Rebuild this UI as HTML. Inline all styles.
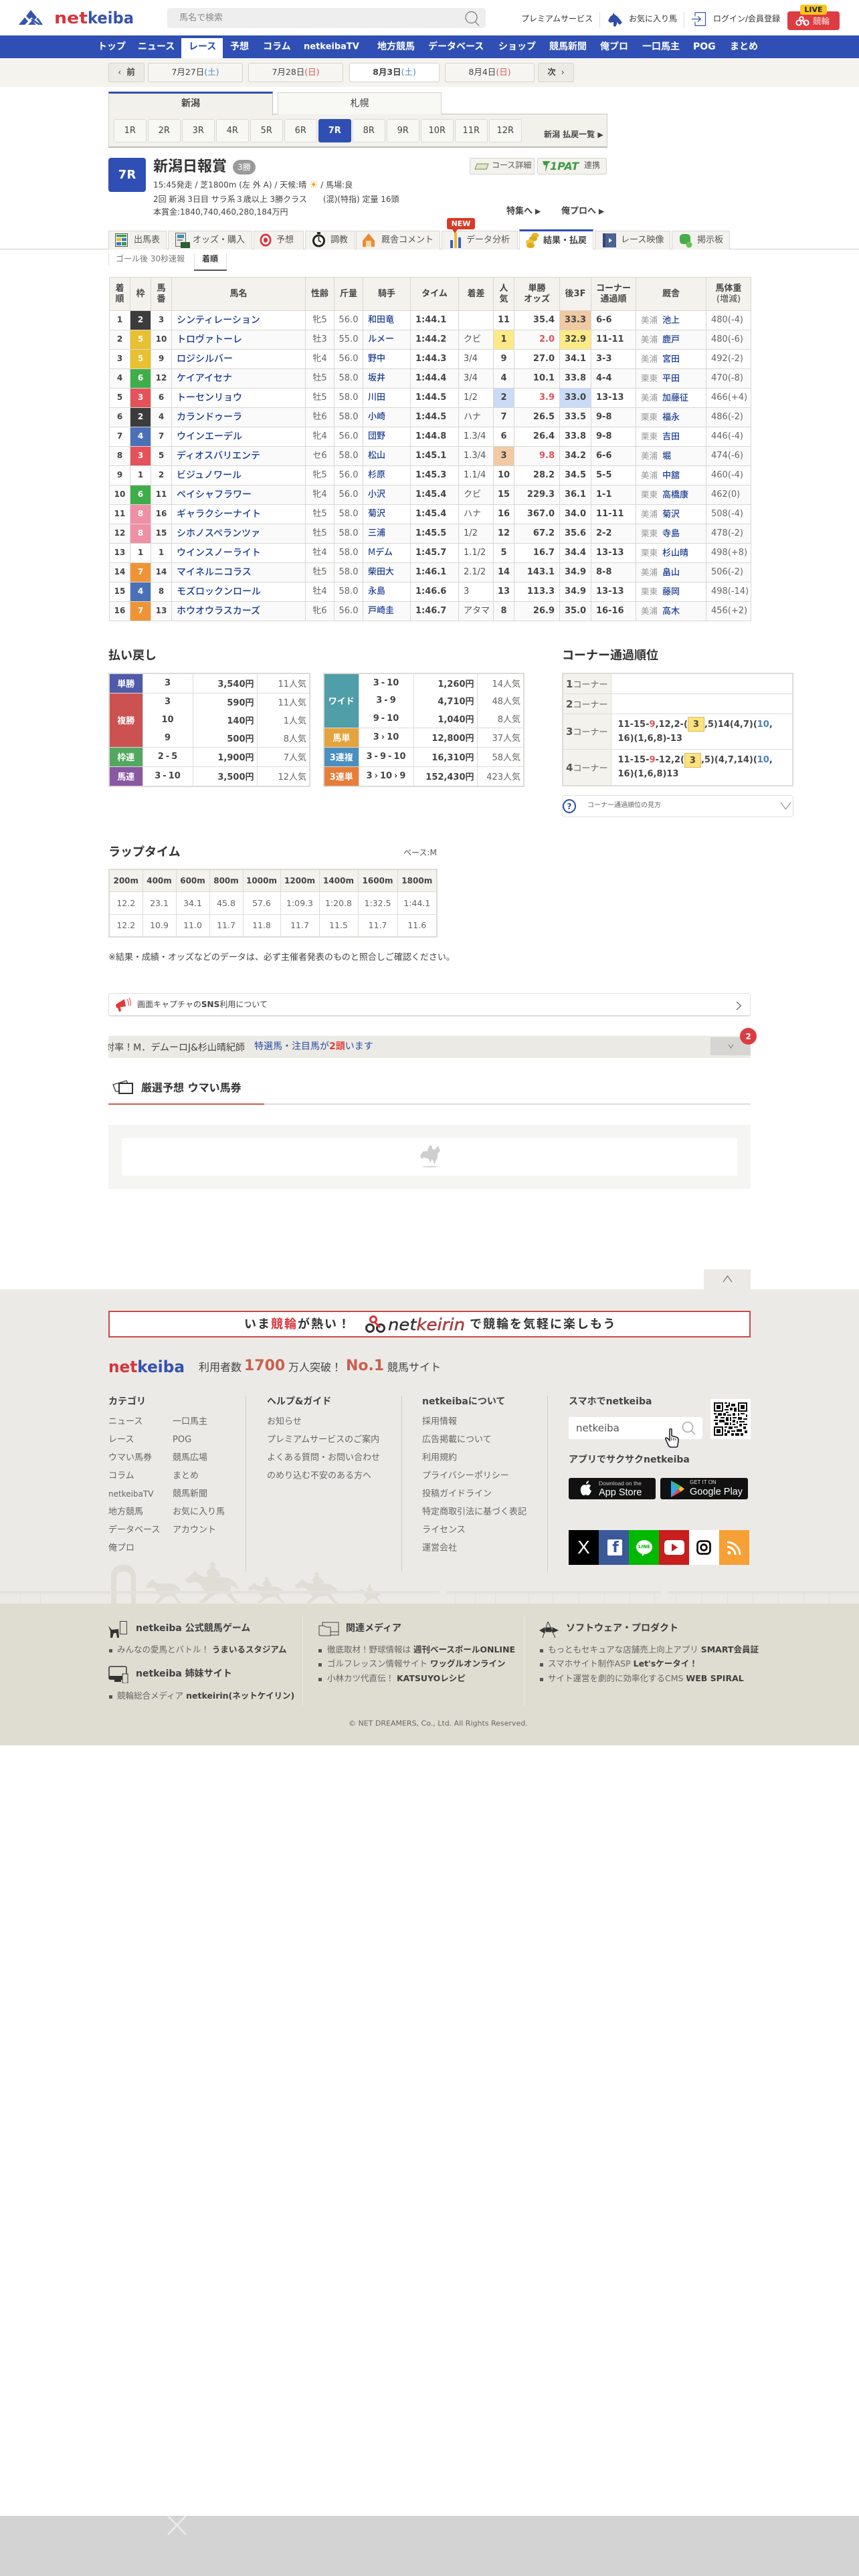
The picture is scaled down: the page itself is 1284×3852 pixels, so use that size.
<!DOCTYPE html>
<html lang="ja"><head><meta charset="utf-8"><title>新潟日報賞 | netkeiba</title>
<style>
*{box-sizing:border-box}
html,body{margin:0;padding:0}
body{width:1284px;height:3852px;position:relative;overflow:hidden;background:#fff;font-family:"DejaVu Sans","Noto Sans CJK JP",sans-serif;font-size:13px;color:#333}
.b{position:absolute}
.t{position:absolute;white-space:nowrap;transform:translateY(-50%);line-height:1}
.c{position:absolute;display:flex;align-items:center;justify-content:center;white-space:nowrap;line-height:1}
.w{color:#fff;font-weight:bold;font-size:14px}
.bn{background:#f6f5f1;border:1px solid #d5d4cf;border-radius:3px;font-size:12.5px;color:#444}
.rb{top:178px;width:48.5px;height:34.5px;background:#f7f7f4;border:1px solid #dbdad5;border-radius:3px;font-size:13px;color:#444}
.tab{top:345px;height:28px;background:#f3f2ee;border:1px solid #d9d8d3;border-bottom:0}
.tt{top:359px;font-size:13px;color:#555}
table{border-collapse:collapse;table-layout:fixed;position:absolute}
.r th{background:#f3f2ed;color:#444;font-size:13px;font-weight:bold;border:1px solid #d8d7d3;padding:0;line-height:16px;height:50px}
.r td{border:1px solid #d8d7d3;height:29px;padding:0;font-size:13px;line-height:16px;white-space:nowrap;overflow:hidden}
.r tbody tr:nth-child(even) td{background:#fafafa}
.r tbody tr:nth-child(odd) td{background:#fff}
.r td:nth-child(1),.r td:nth-child(3){text-align:center;font-weight:bold;color:#444;font-size:12px;padding-bottom:3px}
.r td:nth-child(2){text-align:center;font-weight:bold;color:#fff;font-size:12px;padding-bottom:3px}
.r td:nth-child(4){padding-left:7px;font-size:14px;color:#1c3f94;font-weight:500}
.r td:nth-child(5),.r td:nth-child(6){text-align:center;color:#666}
.r td:nth-child(7){padding-left:7px;color:#1c3f94;font-weight:500}
.r td:nth-child(8),.r td:nth-child(12){font-weight:bold;color:#444;padding-left:7px}
.r td:nth-child(12){padding-left:0;text-align:center}
.r td:nth-child(9){padding-left:7px;color:#555}
.r td:nth-child(10){text-align:center;font-weight:bold;color:#444}
.r td:nth-child(11){text-align:right;padding-right:7px;font-weight:bold;color:#444}
.r td:nth-child(13){padding-left:7px;font-weight:bold;color:#444}
.r td:nth-child(14){padding-left:7px;color:#1c3f94;font-weight:500}
.r td:nth-child(14) u{text-decoration:none;color:#999;font-weight:400;font-size:12.5px;margin-right:7px}
.r td:nth-child(15){padding-left:7px;color:#666}
.r tbody tr td.w1{background:#fff;color:#444}.r tbody tr td.w2{background:#3c3c3c}.r tbody tr td.w3{background:#e5525a}.r tbody tr td.w4{background:#4a70b8}.r tbody tr td.w5{background:#e8c030}.r tbody tr td.w6{background:#3fae4a}.r tbody tr td.w7{background:#ef9436}.r tbody tr td.w8{background:#ef90a5}
.r tbody tr td.y{background:#fdea86}.r tbody tr td.bl{background:#c9dbf6}.r tbody tr td.o{background:#f1c9a2}
.r tbody tr td.red{color:#d9545a}
.p td,.p th{border:1px solid #dcdcd8;padding:0;font-size:13px;white-space:nowrap}
.p{border:2px solid #dcdcd8}
.p th{color:#fff;font-size:13px;font-weight:bold;text-align:center;border-color:#dcdcd8}
.p td{color:#444;font-weight:bold}
.p .n{text-align:center}
.p .v{text-align:right;padding-right:4px}
.p .k{text-align:right;padding-right:4px;font-weight:400;color:#666}
.p .nb td{border-top:0;border-bottom:0}
.p s{text-decoration:none;margin:0 3px}
.cr td,.cr th{border:1px solid #dcdcd8;padding:0;font-size:13px}
.cr{border:2px solid #dcdcd8}
.cr th{background:#f3f2ed;text-align:left;padding-left:4px;font-weight:400;color:#666;white-space:nowrap}
.cr th b{font-size:15px;color:#555}
.cr td{padding-left:10px;font-weight:bold;color:#444;line-height:21px;white-space:nowrap}
.cr i{font-style:normal;display:inline-block;width:25px;height:22px;line-height:21px;background:#ffe27c;border:1px solid #d8bb55;text-align:center;vertical-align:middle;margin:-2px 0}
.lap td,.lap th{border:1px solid #dcdcd8;padding:0;text-align:center;white-space:nowrap}
.lap{border:2px solid #dcdcd8}
.lap th{background:#f3f2ed;color:#444;font-size:12px;height:33px}
.lap td{color:#666;height:34px;font-size:12.5px}
.fl{font-size:13px;color:#666}
.fh{font-size:14px;font-weight:bold;color:#444}
.d{font-size:12.5px;color:#666}
.d b{color:#3f3f3f}
.sq{position:absolute;width:5px;height:5px;background:#555}
.soc{position:absolute;top:2288px;width:45px;height:52px}
</style></head><body>

<!-- HEADER -->
<svg class="b" style="left:28px;top:15px" width="174" height="24" viewBox="0 0 174 24">
<path d="M0 22 L9 11 L14 17 L9 22Z M11 9 L18 0 L27 11 L23 15 L19 11 L16 14Z M18 15 L20 13 L34 22 L29 22Z M14 22 L20 16 L26 22Z M26 13 L29 12 L36 22 L33 22Z" fill="#3552b0"/>
<text x="53" y="20" font-family="DejaVu Sans" font-weight="bold" font-size="24" textLength="50" lengthAdjust="spacingAndGlyphs" fill="#d8343c">net</text>
<text x="103" y="20" font-family="DejaVu Sans" font-weight="bold" font-size="24" textLength="69" lengthAdjust="spacingAndGlyphs" fill="#3552b0">keiba</text>
</svg>
<div class="b" style="left:250px;top:12px;width:476px;height:30px;background:#eeeeee;border-radius:4px"></div>
<div class="t" style="left:268px;top:27px;font-size:13px;color:#888">馬名で検索</div>
<svg class="b" style="left:694px;top:16px" width="24" height="24" viewBox="0 0 24 24" fill="none" stroke="#777" stroke-width="1.2"><circle cx="10.5" cy="10" r="8.5"/><path d="M16.5 16.5 L22 22.5"/></svg>
<div class="t" style="left:779px;top:28px;font-size:12px;color:#333">プレミアムサービス</div>
<div class="b" style="left:896px;top:18px;width:1px;height:23px;background:#ddd"></div>
<svg class="b" style="left:909px;top:19px" width="22" height="22" viewBox="0 0 22 22"><path d="M8 0 L10 3 C14 5 17 9 21 15 L17 18 L13 14 L13 17 L11 21 L8 20 L8 14 L3 15 L0 12 L3 6 L7 3Z" fill="#2d4da8"/></svg>
<div class="t" style="left:940px;top:28px;font-size:12px;color:#333">お気に入り馬</div>
<div class="b" style="left:1022px;top:18px;width:1px;height:23px;background:#ddd"></div>
<svg class="b" style="left:1034px;top:18px" width="22" height="21" viewBox="0 0 22 21" fill="none" stroke="#3a56a8" stroke-width="1.2"><path d="M5 0.6 H20.5 V20.4 H5 V14.5 M5 6.5 V0.6"/><path d="M0 10.5 H13 M9 6.5 L13.5 10.5 L9 14.5"/></svg>
<div class="t" style="left:1066px;top:28px;font-size:12px;color:#333">ログイン/会員登録</div>
<div class="b" style="left:1177px;top:17px;width:78px;height:28px;background:#dc3c42;border-radius:4px"></div>
<svg class="b" style="left:1189px;top:24px" width="21" height="15" viewBox="0 0 21 15" fill="none" stroke="#fff" stroke-width="2"><circle cx="5" cy="10" r="3.6"/><circle cx="16" cy="10" r="3.6"/><circle cx="9" cy="4" r="2.8"/><path d="M10 6 L15 12"/></svg>
<div class="t" style="left:1215px;top:32px;font-size:12.5px;color:#ffe4e4">競輪</div>
<div class="c" style="left:1196px;top:7px;width:40px;height:15px;background:#fdc51a;border-radius:3px;font-size:11px;font-weight:bold;color:#222">LIVE</div>

<!-- NAV -->
<div class="b" style="left:0;top:53px;width:1284px;height:34px;background:#2f4fb4"></div>
<div class="b" style="left:271px;top:57px;width:61.5px;height:30px;background:#fff"></div>
<div class="t w" style="left:146px;top:70px">トップ</div>
<div class="t w" style="left:206px;top:70px">ニュース</div>
<div class="t" style="left:282px;top:70px;font-size:14px;font-weight:bold;color:#2f4fb4">レース</div>
<div class="t w" style="left:344px;top:70px">予想</div>
<div class="t w" style="left:393px;top:70px">コラム</div>
<div class="t w" style="left:454px;top:70px;font-size:13px">netkeibaTV</div>
<div class="t w" style="left:564px;top:70px">地方競馬</div>
<div class="t w" style="left:640px;top:70px">データベース</div>
<div class="t w" style="left:745px;top:70px">ショップ</div>
<div class="t w" style="left:821px;top:70px">競馬新聞</div>
<div class="t w" style="left:897px;top:70px">俺プロ</div>
<div class="t w" style="left:960px;top:70px">一口馬主</div>
<div class="t w" style="left:1036px;top:70px;font-size:14px">POG</div>
<div class="t w" style="left:1091px;top:70px">まとめ</div>

<!-- DATE BAR -->
<div class="b" style="left:0;top:87px;width:1284px;height:43px;background:#f4f3ee"></div>
<div class="c bn" style="left:162px;top:94px;width:54px;height:29px;background:#ecebe6">‹&nbsp;&nbsp;<b>前</b></div>
<div class="c bn" style="left:221px;top:94px;width:142px;height:29px">7月27日<span style="color:#4a87c0">(土)</span></div>
<div class="c bn" style="left:371px;top:94px;width:142px;height:29px">7月28日<span style="color:#d9534f">(日)</span></div>
<div class="c bn" style="left:522px;top:94px;width:135px;height:29px;background:#fff"><b>8月3日</b><span style="color:#4a87c0">(土)</span></div>
<div class="c bn" style="left:665px;top:94px;width:134px;height:29px">8月4日<span style="color:#d9534f">(日)</span></div>
<div class="c bn" style="left:804px;top:94px;width:54px;height:29px;background:#ecebe6"><b>次</b>&nbsp;&nbsp;›</div>

<!-- COURSE TABS -->
<div class="b" style="left:162px;top:170px;width:746px;height:51px;background:#f2f1ec;border:1px solid #d0cfca;border-top-color:#c4c3be;border-bottom:2px solid #bdbcb7"></div>
<div class="c" style="left:162px;top:137px;width:246px;height:35px;background:#f2f1ec;border-top:3px solid #2f4fb4;border-left:1px solid #d0cfca;border-right:1px solid #c4c3be;font-size:14px;font-weight:bold;color:#444;padding-bottom:2px">新潟</div>
<div class="c" style="left:415px;top:138px;width:245px;height:33px;background:#f8f8f5;border:1px solid #d5d4cf;border-bottom:0;font-size:14px;color:#444">札幌</div>
<div class="c rb" style="left:170px">1R</div><div class="c rb" style="left:221px">2R</div><div class="c rb" style="left:272px">3R</div><div class="c rb" style="left:323px">4R</div><div class="c rb" style="left:374px">5R</div><div class="c rb" style="left:425px">6R</div>
<div class="c rb" style="left:476px;background:#2f4fb4;border-color:#2f4fb4;color:#fff;font-weight:bold">7R</div>
<div class="c rb" style="left:527px">8R</div><div class="c rb" style="left:578px">9R</div><div class="c rb" style="left:629px">10R</div><div class="c rb" style="left:680px">11R</div><div class="c rb" style="left:731px">12R</div>
<div class="t" style="left:813px;top:201px;font-size:12px;font-weight:bold;color:#444">新潟 払戻一覧 <span style="font-size:11px">▶</span></div>

<!-- RACE INFO -->
<div class="c" style="left:162px;top:236px;width:56px;height:51px;background:#2f4fb4;border-radius:4px;color:#fff;font-size:18px;font-weight:bold">7R</div>
<div class="t" style="left:229px;top:250px;font-size:22px;font-weight:bold;color:#333">新潟日報賞</div>
<div class="c" style="left:348px;top:239px;width:34px;height:22px;background:#9a9a9a;border-radius:11px;color:#fff;font-size:12px">3勝</div>
<div class="t" style="left:229px;top:277px;font-size:12px;color:#444">15:45発走 / 芝1800m (左 外 A) / 天候:晴 <span style="color:#f0a020;font-size:15px;vertical-align:-1px">☀</span> / 馬場:良</div>
<div class="t" style="left:229px;top:298px;font-size:12px;color:#444">2回 新潟 3日目 サラ系３歳以上 3勝クラス　　(混)(特指) 定量 16頭</div>
<div class="t" style="left:229px;top:317px;font-size:12px;color:#444">本賞金:1840,740,460,280,184万円</div>
<div class="b" style="left:702px;top:236px;width:97px;height:25px;background:#f3f2ed;border:1px solid #d5d4cf;border-radius:2px"></div>
<svg class="b" style="left:709px;top:243px" width="22" height="12" viewBox="0 0 22 12"><path d="M4 2 H21 L18 10 H1Z" fill="#dfe7c8" stroke="#7b8a55"/></svg>
<div class="t" style="left:735px;top:247px;font-size:12px;color:#555">コース詳細</div>
<div class="b" style="left:803px;top:236px;width:104px;height:25px;background:#f3f2ed;border:1px solid #d5d4cf;border-radius:2px"></div>
<svg class="b" style="left:810px;top:240px" width="14" height="17" viewBox="0 0 14 17"><path d="M1 1 H13 L9 5 L6 15 L5 16 L6 7 H3Z" fill="#3e9a44"/></svg>
<div class="t" style="left:822px;top:249px;font-size:16px;font-weight:bold;font-style:italic;color:#3e9a44">1PAT</div>
<div class="t" style="left:873px;top:247px;font-size:12px;color:#555">連携</div>
<div class="t" style="left:757px;top:316px;font-size:13px;font-weight:bold;color:#444">特集へ<span style="font-size:11px"> ▶</span></div>
<div class="t" style="left:839px;top:316px;font-size:13px;font-weight:bold;color:#444">俺プロへ<span style="font-size:11px"> ▶</span></div>

<!-- RACE TABS -->
<div class="b" style="left:0;top:372px;width:1284px;height:1px;background:#cfcfcb"></div>
<div class="b tab" style="left:162px;width:87px"></div><div class="b tab" style="left:251px;width:126px"></div><div class="b tab" style="left:379px;width:75px"></div><div class="b tab" style="left:456px;width:75px"></div><div class="b tab" style="left:532px;width:126px"></div><div class="b tab" style="left:660px;width:114px"></div>
<div class="b" style="left:776px;top:343px;width:111px;height:30px;background:#fff;border-top:3px solid #2f4fb4;border-left:1px solid #d9d8d3;border-right:1px solid #d9d8d3"></div>
<div class="b tab" style="left:889px;width:113px"></div><div class="b tab" style="left:1004px;width:87px"></div>
<svg class="b" style="left:172px;top:349px" width="19" height="20" viewBox="0 0 19 20"><rect x=".5" y=".5" width="18" height="19" fill="#fff" stroke="#555"/><rect x="2" y="2" width="15" height="3.5" fill="#3a9a4a"/><rect x="2" y="7" width="7" height="4.5" fill="#e9b93b"/><rect x="10" y="7" width="7" height="4.5" fill="#3d7cc0"/><rect x="2" y="13" width="7" height="5" fill="#3d7cc0"/><rect x="10" y="13" width="7" height="5" fill="#3a9a4a"/></svg>
<div class="t tt" style="left:200px">出馬表</div>
<svg class="b" style="left:262px;top:348px" width="22" height="23" viewBox="0 0 22 23"><rect x=".5" y=".5" width="15" height="20" fill="#e8e8e4" stroke="#666"/><rect x="3" y="3" width="10" height="5" fill="#3d8fb0"/><rect x="3" y="10" width="8" height="2" fill="#888"/><rect x="8" y="14" width="14" height="9" fill="#2f5d2f"/></svg>
<div class="t tt" style="left:288px">オッズ・購入</div>
<svg class="b" style="left:388px;top:349px" width="18" height="20" viewBox="0 0 18 20" fill="none"><ellipse cx="9" cy="10" rx="8.5" ry="9.5" fill="#d8343c"/><ellipse cx="9" cy="10" rx="5.8" ry="6.6" fill="#fff"/><ellipse cx="9" cy="10" rx="3.2" ry="3.8" fill="#d8343c"/></svg>
<div class="t tt" style="left:413px">予想</div>
<svg class="b" style="left:467px;top:347px" width="19" height="23" viewBox="0 0 19 23" fill="none"><circle cx="9.5" cy="13" r="8" fill="#fff" stroke="#222" stroke-width="3"/><rect x="7" y="0" width="5" height="3" fill="#222"/><path d="M9.5 7 V13 L13 15" stroke="#222" stroke-width="1.6"/></svg>
<div class="t tt" style="left:494px">調教</div>
<svg class="b" style="left:542px;top:349px" width="18" height="20" viewBox="0 0 18 20"><path d="M9 0 L18 11 V20 H0 V11Z" fill="#ec8a35"/><path d="M5 11 H13 V20 H5Z" fill="#f6d9a5"/></svg>
<div class="t tt" style="left:570px">厩舎コメント</div>
<svg class="b" style="left:672px;top:347px" width="18" height="24" viewBox="0 0 18 24"><rect x="1" y="12" width="4" height="12" fill="#3a5fc0"/><rect x="7" y="1" width="4" height="23" fill="#f0b92f"/><rect x="13" y="8" width="4" height="16" fill="#3a5fc0"/></svg>
<div class="t tt" style="left:697px">データ分析</div>
<svg class="b" style="left:786px;top:347px" width="20" height="24" viewBox="0 0 20 24"><ellipse cx="14" cy="5" rx="5.5" ry="4" fill="#e9b528"/><ellipse cx="11" cy="10" rx="6" ry="4" fill="#dcaa20"/><ellipse cx="6" cy="15" rx="6" ry="4" fill="#efc53a"/><ellipse cx="7" cy="20" rx="6" ry="4" fill="#dcaa20"/></svg>
<div class="t" style="left:812px;top:360px;font-size:13px;font-weight:bold;color:#444">結果・払戻</div>
<svg class="b" style="left:901px;top:349px" width="20" height="21" viewBox="0 0 20 21"><rect width="20" height="21" fill="#4a6294"/><rect x="0" y="0" width="4" height="21" fill="#36496f"/><path d="M9 7 L14 10.5 L9 14Z" fill="#fff"/></svg>
<div class="t tt" style="left:928px">レース映像</div>
<svg class="b" style="left:1016px;top:350px" width="20" height="21" viewBox="0 0 20 21"><rect x="0" y="0" width="16" height="15" rx="5" fill="#46ad4a"/><circle cx="14" cy="16" r="4.5" fill="#67c25a"/></svg>
<div class="t tt" style="left:1042px">掲示板</div>
<div class="c" style="left:668px;top:326px;width:42px;height:17px;background:#d93a26;border-radius:3px;color:#fff;font-size:11px;font-weight:bold">NEW</div>
<svg class="b" style="left:676px;top:343px" width="8" height="6"><path d="M0 0 H8 L4 6Z" fill="#d93a26"/></svg>

<!-- SUB TABS -->
<div class="b" style="left:162px;top:379px;width:1px;height:18px;background:#ddd"></div>
<div class="t" style="left:173px;top:387px;font-size:12px;color:#777">ゴール後 30秒速報</div>
<div class="b" style="left:290px;top:379px;width:1px;height:25px;background:#ddd"></div>
<div class="b" style="left:338px;top:379px;width:1px;height:25px;background:#ddd"></div>
<div class="b" style="left:290px;top:403px;width:49px;height:2px;background:#555"></div>
<div class="t" style="left:302px;top:387px;font-size:12px;font-weight:bold;color:#333">着順</div>

<!-- RESULT TABLE -->
<table class="r" style="left:163px;top:414px;width:959px">
<colgroup><col style="width:31px"><col style="width:31px"><col style="width:31px"><col style="width:200px"><col style="width:43px"><col style="width:43px"><col style="width:71px"><col style="width:72px"><col style="width:52px"><col style="width:31px"><col style="width:68px"><col style="width:47px"><col style="width:67px"><col style="width:105px"><col style="width:67px"></colgroup>
<thead><tr><th>着<br>順</th><th>枠</th><th>馬<br>番</th><th>馬名</th><th>性齢</th><th>斤量</th><th>騎手</th><th>タイム</th><th>着差</th><th>人<br>気</th><th>単勝<br>オッズ</th><th>後3F</th><th>コーナー<br>通過順</th><th>厩舎</th><th>馬体重<br><span style="font-weight:400">(増減)</span></th></tr></thead>
<tbody>
<tr><td>1</td><td class="w2">2</td><td>3</td><td>シンティレーション</td><td>牝5</td><td>56.0</td><td>和田竜</td><td>1:44.1</td><td></td><td>11</td><td>35.4</td><td class="o">33.3</td><td>6-6</td><td><u>美浦</u>池上</td><td>480(-4)</td></tr>
<tr><td>2</td><td class="w5">5</td><td>10</td><td>トロヴァトーレ</td><td>牡3</td><td>55.0</td><td>ルメー</td><td>1:44.2</td><td>クビ</td><td class="y">1</td><td class="red">2.0</td><td class="y">32.9</td><td>11-11</td><td><u>美浦</u>鹿戸</td><td>480(-6)</td></tr>
<tr><td>3</td><td class="w5">5</td><td>9</td><td>ロジシルバー</td><td>牝4</td><td>56.0</td><td>野中</td><td>1:44.3</td><td>3/4</td><td>9</td><td>27.0</td><td>34.1</td><td>3-3</td><td><u>美浦</u>宮田</td><td>492(-2)</td></tr>
<tr><td>4</td><td class="w6">6</td><td>12</td><td>ケイアイセナ</td><td>牡5</td><td>58.0</td><td>坂井</td><td>1:44.4</td><td>3/4</td><td>4</td><td>10.1</td><td>33.8</td><td>4-4</td><td><u>栗東</u>平田</td><td>470(-8)</td></tr>
<tr><td>5</td><td class="w3">3</td><td>6</td><td>トーセンリョウ</td><td>牡5</td><td>58.0</td><td>川田</td><td>1:44.5</td><td>1/2</td><td class="bl">2</td><td class="red">3.9</td><td class="bl">33.0</td><td>13-13</td><td><u>美浦</u>加藤征</td><td>466(+4)</td></tr>
<tr><td>6</td><td class="w2">2</td><td>4</td><td>カランドゥーラ</td><td>牡6</td><td>58.0</td><td>小崎</td><td>1:44.5</td><td>ハナ</td><td>7</td><td>26.5</td><td>33.5</td><td>9-8</td><td><u>栗東</u>福永</td><td>486(-2)</td></tr>
<tr><td>7</td><td class="w4">4</td><td>7</td><td>ウインエーデル</td><td>牝4</td><td>56.0</td><td>団野</td><td>1:44.8</td><td>1.3/4</td><td>6</td><td>26.4</td><td>33.8</td><td>9-8</td><td><u>栗東</u>吉田</td><td>446(-4)</td></tr>
<tr><td>8</td><td class="w3">3</td><td>5</td><td>ディオスバリエンテ</td><td>セ6</td><td>58.0</td><td>松山</td><td>1:45.1</td><td>1.3/4</td><td class="o">3</td><td class="red">9.8</td><td>34.2</td><td>6-6</td><td><u>美浦</u>堀</td><td>474(-6)</td></tr>
<tr><td>9</td><td class="w1">1</td><td>2</td><td>ビジュノワール</td><td>牝5</td><td>56.0</td><td>杉原</td><td>1:45.3</td><td>1.1/4</td><td>10</td><td>28.2</td><td>34.5</td><td>5-5</td><td><u>美浦</u>中舘</td><td>460(-4)</td></tr>
<tr><td>10</td><td class="w6">6</td><td>11</td><td>ペイシャフラワー</td><td>牝4</td><td>56.0</td><td>小沢</td><td>1:45.4</td><td>クビ</td><td>15</td><td>229.3</td><td>36.1</td><td>1-1</td><td><u>栗東</u>高橋康</td><td>462(0)</td></tr>
<tr><td>11</td><td class="w8">8</td><td>16</td><td>ギャラクシーナイト</td><td>牡5</td><td>58.0</td><td>菊沢</td><td>1:45.4</td><td>ハナ</td><td>16</td><td>367.0</td><td>34.0</td><td>11-11</td><td><u>美浦</u>菊沢</td><td>508(-4)</td></tr>
<tr><td>12</td><td class="w8">8</td><td>15</td><td>シホノスペランツァ</td><td>牡5</td><td>58.0</td><td>三浦</td><td>1:45.5</td><td>1/2</td><td>12</td><td>67.2</td><td>35.6</td><td>2-2</td><td><u>栗東</u>寺島</td><td>478(-2)</td></tr>
<tr><td>13</td><td class="w1">1</td><td>1</td><td>ウインスノーライト</td><td>牡4</td><td>58.0</td><td>Mデム</td><td>1:45.7</td><td>1.1/2</td><td>5</td><td>16.7</td><td>34.4</td><td>13-13</td><td><u>栗東</u>杉山晴</td><td>498(+8)</td></tr>
<tr><td>14</td><td class="w7">7</td><td>14</td><td>マイネルニコラス</td><td>牡5</td><td>58.0</td><td>柴田大</td><td>1:46.1</td><td>2.1/2</td><td>14</td><td>143.1</td><td>34.9</td><td>8-8</td><td><u>美浦</u>畠山</td><td>506(-2)</td></tr>
<tr><td>15</td><td class="w4">4</td><td>8</td><td>モズロックンロール</td><td>牡4</td><td>58.0</td><td>永島</td><td>1:46.6</td><td>3</td><td>13</td><td>113.3</td><td>34.9</td><td>13-13</td><td><u>栗東</u>藤岡</td><td>498(-14)</td></tr>
<tr><td>16</td><td class="w7">7</td><td>13</td><td>ホウオウラスカーズ</td><td>牝6</td><td>56.0</td><td>戸崎圭</td><td>1:46.7</td><td>アタマ</td><td>8</td><td>26.9</td><td>35.0</td><td>16-16</td><td><u>美浦</u>高木</td><td>456(+2)</td></tr>
</tbody></table>

<!-- PAYBACK -->
<div class="t" style="left:162px;top:981px;font-size:18px;font-weight:bold;color:#333">払い戻し</div>
<table class="p" style="left:162px;top:1006px;width:300px">
<colgroup><col style="width:50px"><col style="width:75px"><col style="width:96px"><col style="width:79px"></colgroup>
<tr style="height:29px"><th style="background:#4f5aa8">単勝</th><td class="n">3</td><td class="v">3,540円</td><td class="k">11人気</td></tr>
<tr style="height:27px" class="nb"><th rowspan="3" style="background:#cc5252">複勝</th><td class="n" style="border-top:1px solid #dcdcd8">3</td><td class="v" style="border-top:1px solid #dcdcd8">590円</td><td class="k" style="border-top:1px solid #dcdcd8">11人気</td></tr>
<tr style="height:27px" class="nb"><td class="n">10</td><td class="v">140円</td><td class="k">1人気</td></tr>
<tr style="height:27px" class="nb"><td class="n">9</td><td class="v">500円</td><td class="k">8人気</td></tr>
<tr style="height:29px"><th style="background:#52a860;border-top:1px solid #dcdcd8">枠連</th><td class="n" style="border-top:1px solid #dcdcd8">2<s>-</s>5</td><td class="v" style="border-top:1px solid #dcdcd8">1,900円</td><td class="k" style="border-top:1px solid #dcdcd8">7人気</td></tr>
<tr style="height:30px"><th style="background:#8a57a2">馬連</th><td class="n">3<s>-</s>10</td><td class="v">3,500円</td><td class="k">12人気</td></tr>
</table>
<table class="p" style="left:483px;top:1006px;width:299px">
<colgroup><col style="width:52px"><col style="width:82px"><col style="width:95px"><col style="width:70px"></colgroup>
<tr style="height:27px" class="nb"><th rowspan="3" style="background:#4f9ea8">ワイド</th><td class="n">3<s>-</s>10</td><td class="v">1,260円</td><td class="k">14人気</td></tr>
<tr style="height:27px" class="nb"><td class="n">3<s>-</s>9</td><td class="v">4,710円</td><td class="k">48人気</td></tr>
<tr style="height:27px" class="nb"><td class="n">9<s>-</s>10</td><td class="v">1,040円</td><td class="k">8人気</td></tr>
<tr style="height:29px"><th style="background:#e5a33d;border-top:1px solid #dcdcd8">馬単</th><td class="n" style="border-top:1px solid #dcdcd8">3<s>›</s>10</td><td class="v" style="border-top:1px solid #dcdcd8">12,800円</td><td class="k" style="border-top:1px solid #dcdcd8">37人気</td></tr>
<tr style="height:29px"><th style="background:#4a8fc0">3連複</th><td class="n">3<s>-</s>9<s>-</s>10</td><td class="v">16,310円</td><td class="k">58人気</td></tr>
<tr style="height:30px"><th style="background:#e67e3a">3連単</th><td class="n">3<s>›</s>10<s>›</s>9</td><td class="v">152,430円</td><td class="k">423人気</td></tr>
</table>

<!-- CORNER -->
<div class="t" style="left:840px;top:981px;font-size:18px;font-weight:bold;color:#333">コーナー通過順位</div>
<table class="cr" style="left:840px;top:1006px;width:346px">
<colgroup><col style="width:72px"><col></colgroup>
<tr style="height:30px"><th><b>1</b>コーナー</th><td></td></tr>
<tr style="height:30px"><th><b>2</b>コーナー</th><td></td></tr>
<tr style="height:53px"><th><b>3</b>コーナー</th><td>11-15-<span style="color:#d9545a">9</span>,12,2-(<i>3</i>,5)14(4,7)(<span style="color:#4a7fc0">10</span>,<br>16)(1,6,8)-13</td></tr>
<tr style="height:55px"><th><b>4</b>コーナー</th><td>11-15-<span style="color:#d9545a">9</span>-12,2(<i>3</i>,5)(4,7,14)(<span style="color:#4a7fc0">10</span>,<br>16)(1,6,8)13</td></tr>
</table>
<div class="b" style="left:840px;top:1189px;width:346px;height:33px;background:#fff;border:1px solid #e0e0dc;border-radius:4px"></div>
<div class="c" style="left:841px;top:1195px;width:20px;height:21px;border:2px solid #2a4da8;border-radius:50%;color:#2a4da8;font-size:12px;font-weight:bold">?</div>
<div class="t" style="left:878px;top:1205px;font-size:10px;color:#666">コーナー通過順位の見方</div>
<svg class="b" style="left:1166px;top:1199px" width="17" height="12" fill="none" stroke="#999" stroke-width="1.3"><path d="M1 1 L8.5 11 L16 1"/></svg>

<!-- LAP -->
<div class="t" style="left:162px;top:1275px;font-size:18px;font-weight:bold;color:#333">ラップタイム</div>
<div class="t" style="left:603px;top:1275px;font-size:12px;color:#555">ペース:M</div>
<table class="lap" style="left:162px;top:1299px;width:490px">
<colgroup><col style="width:50px"><col style="width:50px"><col style="width:50px"><col style="width:50px"><col style="width:56px"><col style="width:58px"><col style="width:58px"><col style="width:59px"><col style="width:59px"></colgroup>
<tr><th>200m</th><th>400m</th><th>600m</th><th>800m</th><th>1000m</th><th>1200m</th><th>1400m</th><th>1600m</th><th>1800m</th></tr>
<tr><td>12.2</td><td>23.1</td><td>34.1</td><td>45.8</td><td>57.6</td><td>1:09.3</td><td>1:20.8</td><td>1:32.5</td><td>1:44.1</td></tr>
<tr><td>12.2</td><td>10.9</td><td>11.0</td><td>11.7</td><td>11.8</td><td>11.7</td><td>11.5</td><td>11.7</td><td>11.6</td></tr>
</table>
<div class="t" style="left:162px;top:1432px;font-size:13px;color:#444">※結果・成績・オッズなどのデータは、必ず主催者発表のものと照合しご確認ください。</div>

<!-- SNS BAR -->
<div class="b" style="left:162px;top:1485px;width:960px;height:35px;background:#fff;border:1px solid #e0e0dc;border-bottom:2px solid #ddd;border-radius:4px"></div>
<svg class="b" style="left:172px;top:1492px" width="24" height="21" viewBox="0 0 24 21"><path d="M1 10 L14 2 L16 13 L8 14 L9 20 L6 21 L4 15 L2 15Z" fill="#e23b3b"/><path d="M18 2 Q21 7 20 12 M21 0 Q24 6 23 12" fill="none" stroke="#e23b3b" stroke-width="1"/></svg>
<div class="t" style="left:205px;top:1502px;font-size:12px;color:#444">画面キャプチャの<b>SNS</b>利用について</div>
<svg class="b" style="left:1100px;top:1497px" width="9" height="14" fill="none" stroke="#666" stroke-width="1.2"><path d="M1 1 L7.5 7 L1 13"/></svg>

<!-- MARQUEE -->
<div class="b" style="left:162px;top:1549px;width:960px;height:33px;background:#eceae5"></div>
<div class="b" style="left:162px;top:1549px;width:204px;height:33px;overflow:hidden;display:flex;justify-content:flex-end;align-items:center;white-space:nowrap;font-size:14px;color:#444"><span style="flex:none">連対率！M．デムーロJ&amp;杉山晴紀師</span></div>
<div class="t" style="left:380px;top:1565px;font-size:14px;color:#2a4ca8">特選馬・注目馬が<b style="color:#e23b3b">2頭</b>います</div>
<div class="b" style="left:1062px;top:1551px;width:60px;height:27px;background:#d6d5d1"></div>
<svg class="b" style="left:1088px;top:1561px" width="9" height="7" fill="none" stroke="#777"><path d="M1 1 L4.5 6 L8 1"/></svg>
<div class="c" style="left:1106px;top:1537px;width:25px;height:25px;background:#dc3c42;border-radius:50%;color:#fff;font-size:12px;font-weight:bold">2</div>

<!-- HEADING -->
<svg class="b" style="left:168px;top:1615px" width="32" height="21" viewBox="0 0 32 21" fill="none" stroke="#333" stroke-width="1.3"><rect x="10" y="5" width="20" height="15" stroke-width="2"/><path d="M10 17 H5 L1 7 L21 1 L23 5"/></svg>
<div class="t" style="left:211px;top:1627px;font-size:16px;font-weight:bold;color:#333">厳選予想 ウマい馬券</div>
<div class="b" style="left:162px;top:1650px;width:960px;height:2px;background:#dcdcdc"></div>
<div class="b" style="left:162px;top:1650px;width:233px;height:2px;background:#c9604f"></div>
<div class="b" style="left:162px;top:1682px;width:960px;height:96px;background:#f5f5f4"></div>
<div class="b" style="left:182px;top:1702px;width:920px;height:56px;background:#fff"></div>
<svg class="b" style="left:627px;top:1711px" width="32" height="36" viewBox="0 0 32 36"><path d="M16 1 L19 3 L19 7 L23 8 L28 2 L31 10 L27 14 L27 21 L24 25 L23 31 L19 22 L16 28 L14 22 L7 20 L3 22 L1 17 L5 11 L12 10 L13 6Z" fill="#cfcfcf"/><ellipse cx="16" cy="33.5" rx="12" ry="1.2" fill="#d9d9d9"/></svg>

<!-- FOOTER -->
<div class="b" style="left:1052px;top:1898px;width:70px;height:30px;background:#eceae6"></div>
<svg class="b" style="left:1080px;top:1907px" width="15" height="11" fill="none" stroke="#777" stroke-width="1.2"><path d="M1 10 L7.5 1 L14 10"/></svg>
<div class="b" style="left:0;top:1928px;width:1284px;height:470px;background:#eceae6"></div>
<div class="b" style="left:162px;top:1960px;width:960px;height:40px;background:#fff;border:2px solid #c8494c"></div>
<div class="t" style="left:365px;top:1981px;font-size:18px;font-weight:bold;color:#333;letter-spacing:2px">いま<span style="color:#d8343c">競輪</span>が熱い！</div>
<svg class="b" style="left:546px;top:1966px" width="30" height="28" viewBox="0 0 30 28" fill="none" stroke="#333" stroke-width="3"><circle cx="7" cy="20" r="5.5"/><circle cx="23" cy="20" r="5.5"/><circle cx="12" cy="7" r="4.5" stroke="#d8343c"/><path d="M14 11 L22 19" stroke="#d8343c"/></svg>
<svg class="b" style="left:580px;top:1966px" width="118" height="30"><text x="0" y="23" font-family="DejaVu Sans" font-style="italic" font-size="24" textLength="115" lengthAdjust="spacingAndGlyphs" stroke-width=".4" stroke="currentColor"><tspan fill="#333">net</tspan><tspan fill="#d8343c">keirin</tspan></text></svg>
<div class="t" style="left:702px;top:1981px;font-size:18px;font-weight:bold;color:#333;letter-spacing:2px">で競輪を気軽に楽しもう</div>

<svg class="b" style="left:162px;top:2030px" width="116" height="26"><text x="0" y="22" font-family="DejaVu Sans" font-weight="bold" font-size="24" textLength="114" lengthAdjust="spacingAndGlyphs"><tspan fill="#d8343c">net</tspan><tspan fill="#3552b0">keiba</tspan></text></svg>
<div class="t" style="left:297px;top:2045px;font-size:16px;color:#444">利用者数</div>
<div class="t" style="left:365px;top:2043px;font-size:22px;font-weight:bold;color:#c9604f">1700</div>
<div class="t" style="left:431px;top:2045px;font-size:16px;color:#444">万人突破！</div>
<div class="t" style="left:517px;top:2043px;font-size:22px;font-weight:bold;color:#c9604f">No.1</div>
<div class="t" style="left:579px;top:2045px;font-size:16px;color:#444">競馬サイト</div>

<div class="t fh" style="left:162px;top:2096px">カテゴリ</div>
<div class="t fl" style="left:162px;top:2126px">ニュース</div><div class="t fl" style="left:258px;top:2126px">一口馬主</div>
<div class="t fl" style="left:162px;top:2153px">レース</div><div class="t fl" style="left:258px;top:2153px">POG</div>
<div class="t fl" style="left:162px;top:2180px">ウマい馬券</div><div class="t fl" style="left:258px;top:2180px">競馬広場</div>
<div class="t fl" style="left:162px;top:2207px">コラム</div><div class="t fl" style="left:258px;top:2207px">まとめ</div>
<div class="t fl" style="left:162px;top:2234px;font-size:12px">netkeibaTV</div><div class="t fl" style="left:258px;top:2234px">競馬新聞</div>
<div class="t fl" style="left:162px;top:2261px">地方競馬</div><div class="t fl" style="left:258px;top:2261px">お気に入り馬</div>
<div class="t fl" style="left:162px;top:2288px">データベース</div><div class="t fl" style="left:258px;top:2288px">アカウント</div>
<div class="t fl" style="left:162px;top:2315px">俺プロ</div>
<div class="b" style="left:367px;top:2087px;width:1px;height:263px;background:#ccc"></div>
<div class="t fh" style="left:399px;top:2096px">ヘルプ&amp;ガイド</div>
<div class="t fl" style="left:399px;top:2126px">お知らせ</div>
<div class="t fl" style="left:399px;top:2153px">プレミアムサービスのご案内</div>
<div class="t fl" style="left:399px;top:2180px">よくある質問・お問い合わせ</div>
<div class="t fl" style="left:399px;top:2207px">のめり込む不安のある方へ</div>
<div class="b" style="left:600px;top:2087px;width:1px;height:263px;background:#ccc"></div>
<div class="t fh" style="left:631px;top:2096px">netkeibaについて</div>
<div class="t fl" style="left:631px;top:2126px">採用情報</div>
<div class="t fl" style="left:631px;top:2153px">広告掲載について</div>
<div class="t fl" style="left:631px;top:2180px">利用規約</div>
<div class="t fl" style="left:631px;top:2207px">プライバシーポリシー</div>
<div class="t fl" style="left:631px;top:2234px">投稿ガイドライン</div>
<div class="t fl" style="left:631px;top:2261px">特定商取引法に基づく表記</div>
<div class="t fl" style="left:631px;top:2288px">ライセンス</div>
<div class="t fl" style="left:631px;top:2315px">運営会社</div>
<div class="b" style="left:818px;top:2087px;width:1px;height:263px;background:#ccc"></div>

<div class="t fh" style="left:850px;top:2096px">スマホでnetkeiba</div>
<div class="b" style="left:850px;top:2119px;width:200px;height:33px;background:#fff;border-radius:3px"></div>
<div class="t" style="left:861px;top:2136px;font-size:15px;color:#555">netkeiba</div>
<svg class="b" style="left:1019px;top:2125px" width="21" height="21" fill="none" stroke="#bbb" stroke-width="2"><circle cx="9" cy="9" r="7.5"/><path d="M14 14 L20 20"/></svg>
<svg class="b" style="left:994px;top:2136px" width="22" height="29" viewBox="0 0 22 29"><path d="M7 2 C7 0 10 0 10 2 V11 L17 13 C20 14 20 16 20 18 L19 25 C19 27 18 28 16 28 H9 C7 28 6 27 5 25 L1 16 C0 14 2 13 4 15 L7 18Z" fill="#fff" stroke="#222" stroke-width="1.6"/><path d="M10 13 V18 M13 14 V18 M16 15 V18" stroke="#222"/></svg>
<div class="b" style="left:1062px;top:2092px;width:60px;height:60px;background:#fff"></div>
<svg class="b" style="left:1067px;top:2097px" width="50" height="50" viewBox="0 0 25 25" shape-rendering="crispEdges"><path fill="#111" d="M0 0h7v7h-7zM18 0h7v7h-7zM0 18h7v7h-7z M8 0h2v1h-2zM11 0h1v3h-1zM13 1h3v2h-3zM9 2h2v2h-2zM8 5h3v1h-3zM12 4h2v2h-2zM15 4h2v3h-2zM9 7h2v1h-2zM0 8h2v1h-2zM3 8h3v2h-3zM7 8h2v2h-2zM10 9h3v1h-3zM14 8h2v2h-2zM18 8h1v2h-1zM20 8h3v1h-3zM24 9h1v2h-1zM1 10h2v2h-2zM5 11h3v1h-3zM9 11h2v3h-2zM12 11h1v3h-1zM14 11h3v1h-3zM18 11h3v2h-3zM22 12h3v1h-3zM0 13h3v1h-3zM4 13h4v2h-4zM14 13h2v2h-2zM17 14h1v2h-1zM19 14h4v1h-4zM1 15h2v2h-2zM8 15h3v2h-3zM12 15h1v2h-1zM14 16h2v1h-2zM19 16h2v2h-2zM22 16h3v1h-3zM8 18h2v1h-2zM11 18h3v2h-3zM15 18h3v1h-3zM22 18h2v2h-2zM8 20h1v2h-1zM10 21h2v2h-2zM13 21h3v1h-3zM17 20h4v2h-4zM23 21h2v2h-2zM8 23h2v2h-2zM13 23h2v2h-2zM16 23h3v2h-3zM20 23h2v2h-2z"/><path fill="#fff" d="M1 1h5v5h-5zM19 1h5v5h-5zM1 19h5v5h-5z"/><path fill="#111" d="M2 2h3v3h-3zM20 2h3v3h-3zM2 20h3v3h-3z"/></svg>
<div class="t fh" style="left:850px;top:2183px">アプリでサクサクnetkeiba</div>
<div class="b" style="left:850px;top:2210px;width:130px;height:32px;background:#111;border-radius:3px"></div>
<svg class="b" style="left:867px;top:2214px" width="18" height="24" viewBox="0 0 18 24"><path d="M9 7 C11 5 15 5 16 8 C13 10 14 14 17 15 C16 19 13 23 11 22 C9 21 8 21 6 22 C3 23 0 16 1 12 C2 7 6 5 9 7Z M9 5 C9 2 11 1 13 0 C13 3 11 5 9 5Z" fill="#fff"/></svg>
<div class="t" style="left:895px;top:2218px;font-family:'Liberation Sans',sans-serif;font-size:8.5px;color:#ccc">Download on the</div>
<div class="t" style="left:895px;top:2232px;font-family:'Liberation Sans',sans-serif;font-size:14.5px;color:#fff">App Store</div>
<div class="b" style="left:987px;top:2210px;width:131px;height:32px;background:#111;border-radius:3px"></div>
<svg class="b" style="left:1003px;top:2214px" width="20" height="25" viewBox="0 0 20 25"><path d="M0 0 L11 12.5 L0 25Z" fill="#36a6e8"/><path d="M0 0 L15 8.5 L11 12.5Z" fill="#38c06c"/><path d="M0 25 L15 16.5 L11 12.5Z" fill="#e8434c"/><path d="M15 8.5 L20 12.5 L15 16.5 L11 12.5Z" fill="#fbc02d"/></svg>
<div class="t" style="left:1031px;top:2217px;font-family:'Liberation Sans',sans-serif;font-size:8px;color:#ddd">GET IT ON</div>
<div class="t" style="left:1031px;top:2231px;font-family:'Liberation Sans',sans-serif;font-size:14.5px;color:#fff">Google Play</div>

<div class="c soc" style="left:850px;background:#000;font-family:'Liberation Sans',sans-serif;font-size:28px;color:#fff">X</div>
<div class="b soc" style="left:895px;background:#3b5998"></div><div class="c" style="left:908px;top:2302px;width:22px;height:24px;background:#fff;border-radius:2px;color:#3b5998;font-weight:bold;font-size:22px;padding-left:2px;overflow:hidden;align-items:flex-end">f</div>
<div class="b soc" style="left:940px;background:#00b900"></div><div class="c" style="left:951px;top:2303px;width:24px;height:21px;background:#fff;border-radius:50%;color:#00b900;font-size:7px;font-weight:bold">LINE</div><svg class="b" style="left:959px;top:2322px" width="7" height="5"><path d="M0 0 H7 L1 5Z" fill="#fff"/></svg>
<div class="b soc" style="left:985px;background:#c81e1e"></div><div class="b" style="left:993px;top:2303px;width:30px;height:22px;background:#fff;border-radius:5px"></div><svg class="b" style="left:1004px;top:2308px" width="9" height="12"><path d="M0 0 L9 6 L0 12Z" fill="#c81e1e"/></svg>
<div class="b soc" style="left:1030px;background:#fff"></div><svg class="b" style="left:1041px;top:2303px" width="22" height="22" fill="none" stroke="#000" stroke-width="2.6"><rect x="1.5" y="1.5" width="19" height="19" rx="5"/><circle cx="11" cy="11" r="4.4"/></svg>
<div class="b soc" style="left:1075px;background:#f7a035"></div><svg class="b" style="left:1086px;top:2304px" width="22" height="22" fill="none" stroke="#fff" stroke-width="3"><circle cx="4" cy="18" r="2.6" fill="#fff" stroke="none"/><path d="M1 9 A12 12 0 0 1 13 21 M1 2 A19 19 0 0 1 20 21"/></svg>

<!-- silhouette -->
<svg class="b" style="left:0;top:2335px" width="1284" height="63" viewBox="0 0 1284 63">
<g fill="#dfddd6">
<path d="M166 63 V22 C166 -1 203 -1 203 22 V63 H196 V24 C196 12 174 12 174 24 V63Z"/>
<path d="M2 20 L14 8 L20 2 L24 8 L34 14 L60 14 L80 16 L92 26 L98 40 L90 34 L84 32 L82 44 L92 62 L100 68 L90 68 L74 48 L56 50 L46 58 L36 68 L26 68 L42 50 L34 40 L28 28 L18 24 L8 28Z" transform="translate(217,25) scale(.55)"/>
<path d="M2 20 L14 8 L20 2 L24 8 L34 14 L60 14 L80 16 L92 26 L98 40 L90 34 L84 32 L82 44 L92 62 L100 68 L90 68 L74 48 L56 50 L46 58 L36 68 L26 68 L42 50 L34 40 L28 28 L18 24 L8 28Z M44 14 L40 4 L48 -6 L46 -14 L52 -18 L56 -12 L54 -4 L60 0 L66 12 L56 14Z" transform="translate(275,13) scale(.84,.72)"/>
<path d="M2 20 L14 8 L20 2 L24 8 L34 14 L60 14 L80 16 L92 26 L98 40 L90 34 L84 32 L82 44 L92 62 L100 68 L90 68 L74 48 L56 50 L46 58 L36 68 L26 68 L42 50 L34 40 L28 28 L18 24 L8 28Z M44 14 L40 4 L48 -6 L46 -14 L52 -18 L56 -12 L54 -4 L60 0 L66 12 L56 14Z" transform="translate(369,31) scale(.58,.45)"/>
<path d="M2 20 L14 8 L20 2 L24 8 L34 14 L60 14 L80 16 L92 26 L98 40 L90 34 L84 32 L82 44 L92 62 L100 68 L90 68 L74 48 L56 50 L46 58 L36 68 L26 68 L42 50 L34 40 L28 28 L18 24 L8 28Z M44 14 L40 4 L48 -6 L46 -14 L52 -18 L56 -12 L54 -4 L60 0 L66 12 L56 14Z" transform="translate(439,25) scale(.68,.55)"/>
<path d="M2 20 L14 8 L20 2 L24 8 L34 14 L60 14 L80 16 L92 26 L98 40 L90 34 L84 32 L82 44 L92 62 L100 68 L90 68 L74 48 L56 50 L46 58 L36 68 L26 68 L42 50 L34 40 L28 28 L18 24 L8 28Z M44 14 L40 4 L48 -6 L46 -14 L52 -18 L56 -12 L54 -4 L60 0 L66 12 L56 14Z" transform="translate(533,40) scale(.38,.32)"/>
</g>
<g fill="#e3e1db">
<rect x="0" y="44" width="657" height="4"/><rect x="668" y="44" width="320" height="4"/><rect x="998" y="44" width="286" height="4"/>
<rect x="30" y="48" width="1" height="15"/><rect x="60" y="48" width="1" height="15"/><rect x="680" y="48" width="1" height="15"/><rect x="710" y="48" width="1" height="15"/><rect x="740" y="48" width="1" height="15"/><rect x="790" y="48" width="1" height="15"/><rect x="826" y="48" width="1" height="15"/><rect x="865" y="48" width="1" height="15"/><rect x="903" y="48" width="1" height="15"/><rect x="941" y="48" width="1" height="15"/><rect x="978" y="48" width="1" height="15"/><rect x="1010" y="48" width="1" height="15"/><rect x="1048" y="48" width="1" height="15"/><rect x="1087" y="48" width="1" height="15"/><rect x="1125" y="48" width="1" height="15"/><rect x="1163" y="48" width="1" height="15"/><rect x="1201" y="48" width="1" height="15"/><rect x="1239" y="48" width="1" height="15"/>
</g>
</svg>

<!-- LOWER FOOTER -->
<div class="b" style="left:0;top:2398px;width:1284px;height:212px;background:#dfddd2"></div>
<div class="b" style="left:452px;top:2417px;width:1px;height:133px;background:#eceae3"></div>
<div class="b" style="left:783px;top:2417px;width:1px;height:133px;background:#eceae3"></div>
<svg class="b" style="left:162px;top:2424px" width="29" height="25" viewBox="0 0 29 25"><path d="M0 7 L5 13 L15 12 L16 25 L13 25 L12 18 L8 18 L6 25 L3 25 L3 15Z" fill="#333"/><rect x="17.5" y=".5" width="10" height="19" fill="none" stroke="#444"/></svg>
<div class="t fh" style="left:203px;top:2435px;color:#3f3f3f">netkeiba 公式競馬ゲーム</div>
<div class="sq" style="left:163px;top:2466px"></div>
<div class="t d" style="left:175px;top:2467px">みんなの愛馬とバトル！ <b>うまいるスタジアム</b></div>
<svg class="b" style="left:162px;top:2491px" width="30" height="26" viewBox="0 0 30 26"><rect x="1" y="1" width="26" height="19" rx="2" fill="none" stroke="#333" stroke-width="1.5"/><rect x="1" y="15" width="26" height="5" fill="#333"/><rect x="9" y="20" width="10" height="4" fill="#333"/><rect x="21" y="12" width="8" height="14" fill="#dfddd2" stroke="#333"/></svg>
<div class="t fh" style="left:203px;top:2503px;color:#3f3f3f">netkeiba 姉妹サイト</div>
<div class="sq" style="left:163px;top:2535px"></div>
<div class="t d" style="left:175px;top:2536px">競輪総合メディア <b>netkeirin(ネットケイリン)</b></div>

<svg class="b" style="left:476px;top:2425px" width="31" height="24" viewBox="0 0 31 24" fill="none" stroke="#444"><rect x="6" y="1" width="24" height="19"/><path d="M1 6 H8 L12 8 H18 V21 H4 L1 20Z" fill="#dfddd2"/><path d="M18 15 H30"/></svg>
<div class="t fh" style="left:517px;top:2435px;color:#3f3f3f">関連メディア</div>
<div class="sq" style="left:476px;top:2466px"></div><div class="t d" style="left:489px;top:2467px">徹底取材！野球情報は <b>週刊ベースボールONLINE</b></div>
<div class="sq" style="left:476px;top:2487px"></div><div class="t d" style="left:489px;top:2488px">ゴルフレッスン情報サイト <b>ワッグルオンライン</b></div>
<div class="sq" style="left:476px;top:2509px"></div><div class="t d" style="left:489px;top:2510px">小林カツ代直伝！ <b>KATSUYOレシピ</b></div>

<svg class="b" style="left:806px;top:2424px" width="29" height="25" viewBox="0 0 29 25" fill="none" stroke="#333"><path d="M13 1 L5 25 M13 1 L24 25"/><path d="M1 14 L8 10 V18Z M10 10 H18 V16 H10Z M20 10 L28 14 L20 17Z" fill="#333"/></svg>
<div class="t fh" style="left:846px;top:2435px;color:#3f3f3f">ソフトウェア・プロダクト</div>
<div class="sq" style="left:807px;top:2466px"></div><div class="t d" style="left:819px;top:2467px">もっともセキュアな店舗売上向上アプリ <b>SMART会員証</b></div>
<div class="sq" style="left:807px;top:2487px"></div><div class="t d" style="left:819px;top:2488px">スマホサイト制作ASP <b>Let'sケータイ！</b></div>
<div class="sq" style="left:807px;top:2509px"></div><div class="t d" style="left:819px;top:2510px">サイト運営を劇的に効率化するCMS <b>WEB SPIRAL</b></div>
<div class="t" style="left:521px;top:2577px;font-size:11px;color:#666">© NET DREAMERS, Co., Ltd. All Rights Reserved.</div>

<!-- BOTTOM OVERLAY BAND -->
<div class="b" style="left:0;top:3762px;width:1284px;height:90px;background:#d3d3d3"></div>
<svg class="b" style="left:250px;top:3762px" width="29" height="29" fill="none" stroke="#ececec" stroke-width="2.4"><path d="M1 0 L28 28 M28 0 L1 28"/></svg>
</body></html>
